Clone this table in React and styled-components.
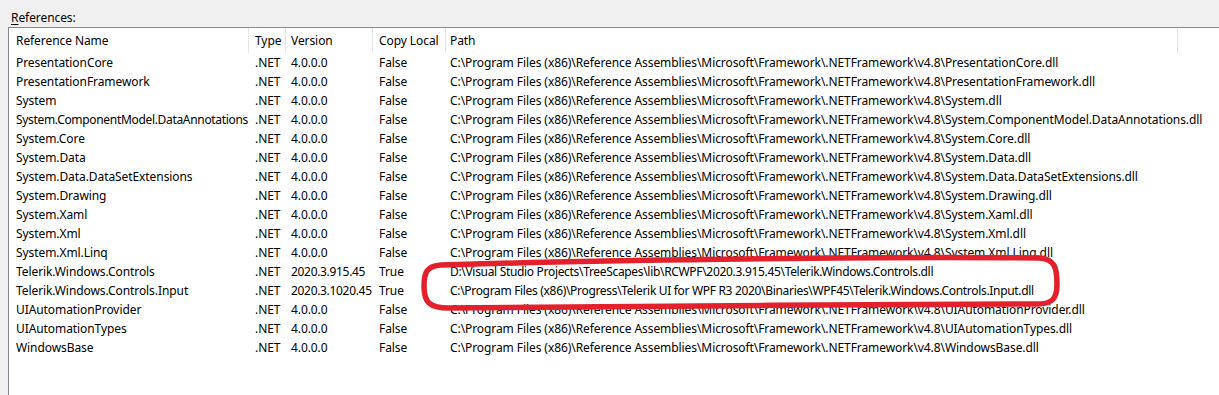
import React from "react";
import styled, { createGlobalStyle } from "styled-components";

const Global = createGlobalStyle`
  html, body { margin: 0; padding: 0; background: #f0f0f0; }
  body { font-family: "Noto Sans", "Open Sans", sans-serif; font-size: 12px; letter-spacing: -0.08px; color: #000; }
  #root { height: 395px; overflow: hidden; }
`;

const Page = styled.div`
  display: flex;
  flex-direction: column;
  height: 395px;
  padding: 9px 0 0 8px;
  box-sizing: border-box;
`;

const Label = styled.div`
  padding-left: 3px;
  height: 18px;
  line-height: 17px;
  u { text-decoration: underline; text-underline-offset: 2px; }
`;

const ListBox = styled.div`
  position: relative;
  flex: 1;
  background: #fff;
  border-left: 1px solid #828790;
  border-top: 1px solid #828790;
`;

const COLS = [
  { title: "Reference Name", width: 240, pad: 7 },
  { title: "Type", width: 37, pad: 6 },
  { title: "Version", width: 87, pad: 5 },
  { title: "Copy Local", width: 73, pad: 6 },
  { title: "Path", width: 732, pad: 4 },
];

const Grid = styled.div`
  display: grid;
  grid-template-columns: ${COLS.map((c) => c.width + "px").join(" ")} 1fr;
`;

const HeadCell = styled.div`
  height: 25px;
  line-height: 25px;
  padding-left: ${(p) => p.$pad}px;
  border-right: ${(p) => (p.$last ? "none" : "1px solid #e5e5e5")};
  white-space: nowrap;
`;

const Cell = styled.div`
  height: 19px;
  line-height: 19px;
  padding-left: ${(p) => p.$pad}px;
  white-space: nowrap;
  letter-spacing: ${(p) => (p.$tight ? "-0.32px" : "inherit")};
`;

const Highlight = styled.svg`
  position: absolute;
  left: 0;
  top: 0;
  pointer-events: none;
`;

const FW = "C:\\Program Files (x86)\\Reference Assemblies\\Microsoft\\Framework\\.NETFramework\\v4.8\\";

const rows = [
  ["PresentationCore", ".NET", "4.0.0.0", "False", FW + "PresentationCore.dll"],
  ["PresentationFramework", ".NET", "4.0.0.0", "False", FW + "PresentationFramework.dll"],
  ["System", ".NET", "4.0.0.0", "False", FW + "System.dll"],
  ["System.ComponentModel.DataAnnotations", ".NET", "4.0.0.0", "False", FW + "System.ComponentModel.DataAnnotations.dll"],
  ["System.Core", ".NET", "4.0.0.0", "False", FW + "System.Core.dll"],
  ["System.Data", ".NET", "4.0.0.0", "False", FW + "System.Data.dll"],
  ["System.Data.DataSetExtensions", ".NET", "4.0.0.0", "False", FW + "System.Data.DataSetExtensions.dll"],
  ["System.Drawing", ".NET", "4.0.0.0", "False", FW + "System.Drawing.dll"],
  ["System.Xaml", ".NET", "4.0.0.0", "False", FW + "System.Xaml.dll"],
  ["System.Xml", ".NET", "4.0.0.0", "False", FW + "System.Xml.dll"],
  ["System.Xml.Linq", ".NET", "4.0.0.0", "False", FW + "System.Xml.Linq.dll"],
  ["Telerik.Windows.Controls", ".NET", "2020.3.915.45", "True", "D:\\Visual Studio Projects\\TreeScapes\\lib\\RCWPF\\2020.3.915.45\\Telerik.Windows.Controls.dll"],
  ["Telerik.Windows.Controls.Input", ".NET", "2020.3.1020.45", "True", "C:\\Program Files (x86)\\Progress\\Telerik UI for WPF R3 2020\\Binaries\\WPF45\\Telerik.Windows.Controls.Input.dll"],
  ["UIAutomationProvider", ".NET", "4.0.0.0", "False", FW + "UIAutomationProvider.dll"],
  ["UIAutomationTypes", ".NET", "4.0.0.0", "False", FW + "UIAutomationTypes.dll"],
  ["WindowsBase", ".NET", "4.0.0.0", "False", FW + "WindowsBase.dll"],
];

const isTight = (row, ci) => {
  if (ci === 0) return row[0].length > 30;
  if (ci === 2 || ci === 4) return row[3] === "True";
  return false;
};

export default function App() {
  return (
    <>
      <Global />
      <Page>
        <Label>
          <u>R</u>eferences:
        </Label>
        <ListBox>
          <Grid>
            {COLS.map((c) => (
              <HeadCell key={c.title} $pad={c.pad}>{c.title}</HeadCell>
            ))}
            <HeadCell $pad={0} $last />
            {rows.map((r, ri) => (
              <React.Fragment key={ri}>
                {r.map((v, ci) => (
                  <Cell key={ci} $pad={COLS[ci].pad} $tight={isTight(r, ci)}>{v}</Cell>
                ))}
                <Cell $pad={0} />
              </React.Fragment>
            ))}
          </Grid>
          <Highlight width="1211" height="370" viewBox="0 0 1211 370">
            <path
              d="M 432 237 C 560 233, 850 228, 1030 230 C 1046 231, 1048 240, 1048 256 C 1048 270, 1044 276, 1028 276 C 850 276, 600 279, 440 280 C 420 280, 415 274, 415 258 C 415 244, 418 238, 432 237 Z"
              fill="none"
              stroke="#e3202b"
              strokeWidth="5.5"
            />
          </Highlight>
        </ListBox>
      </Page>
    </>
  );
}
